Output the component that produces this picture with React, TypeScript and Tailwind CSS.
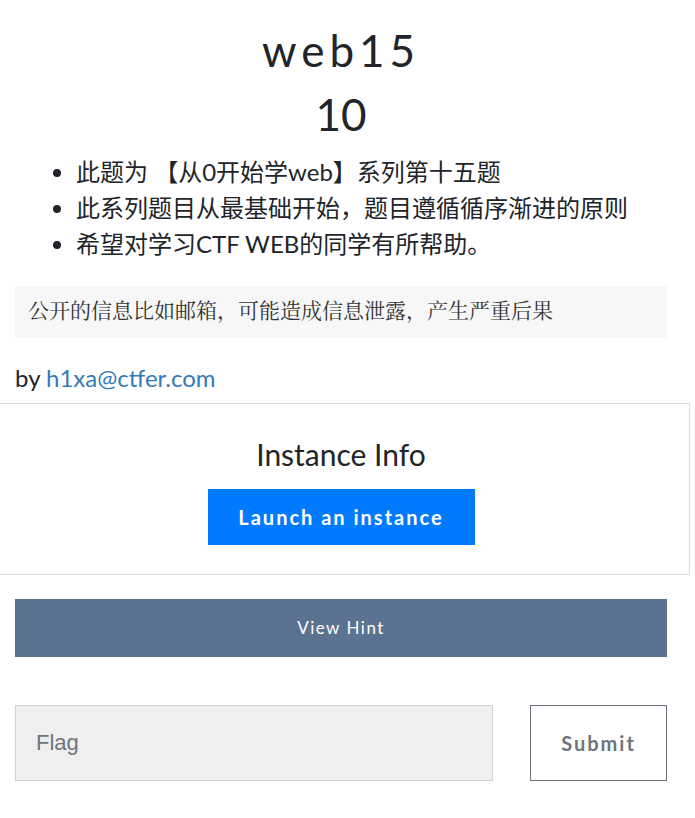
import React from "react";

const bullets = [
  "此题为 【从0开始学web】系列第十五题",
  "此系列题目从最基础开始，题目遵循循序渐进的原则",
  "希望对学习CTF WEB的同学有所帮助。",
];

export default function App() {
  return (
    <div className="min-h-screen bg-white text-[#212529] font-['Lato','Noto_Sans_CJK_SC',sans-serif]">
      <div className="w-[682px] px-[15px] pt-[22px]">
        {/* Title + value */}
        <h3 className="text-center text-[44px] leading-[56px] tracking-[5px] font-normal">web15</h3>
        <h4 className="mt-[10px] text-center text-[44px] leading-[52px] font-normal">10</h4>

        {/* Description */}
        <ul className="list-disc pl-[61px] mt-[14px] text-[24px] leading-[36px]">
          {bullets.map((b) => (
            <li key={b}>{b}</li>
          ))}
        </ul>

        {/* Hint text */}
        <div className="mt-[24px] h-[52px] bg-[#f7f7f7] px-[13px] flex items-center font-['Liberation_Serif','Noto_Serif_CJK_SC',serif] text-[21px] text-[#333]">
          公开的信息比如邮箱，可能造成信息泄露，产生严重后果
        </div>

        <p className="mt-[24px] text-[24px] leading-[32px]">
          by <a className="text-[#337ab7]">h1xa@ctfer.com</a>
        </p>
      </div>

      {/* Instance info */}
      <div className="mt-[9px] -ml-px w-[691px] h-[172px] border border-[#dedede] flex flex-col items-center pt-[30px] pr-[7px]">
        <h3 className="text-[30px] leading-[40px]">Instance Info</h3>
        <button className="mt-[15px] w-[267px] h-[56px] bg-[#007bff] text-white text-[20px] font-bold tracking-[2px]">
          Launch an instance
        </button>
      </div>

      <div className="px-[15px]">
        <button className="mt-[24px] w-[652px] h-[58px] bg-[#5b7290] text-white text-[17px] tracking-[1.5px]">
          View Hint
        </button>

        <div className="mt-[48px] flex gap-[37px]">
          <input
            placeholder="Flag"
            className="w-[478px] h-[76px] bg-[#efefef] border border-[#cdd2d7] px-[20px] text-[22px] font-['Liberation_Sans',sans-serif] placeholder:text-[#6c757d] outline-none"
          />
          <button className="w-[137px] h-[76px] border border-[#6c757d] text-[#6c757d] text-[20px] font-bold tracking-[2px]">
            Submit
          </button>
        </div>
      </div>
    </div>
  );
}
